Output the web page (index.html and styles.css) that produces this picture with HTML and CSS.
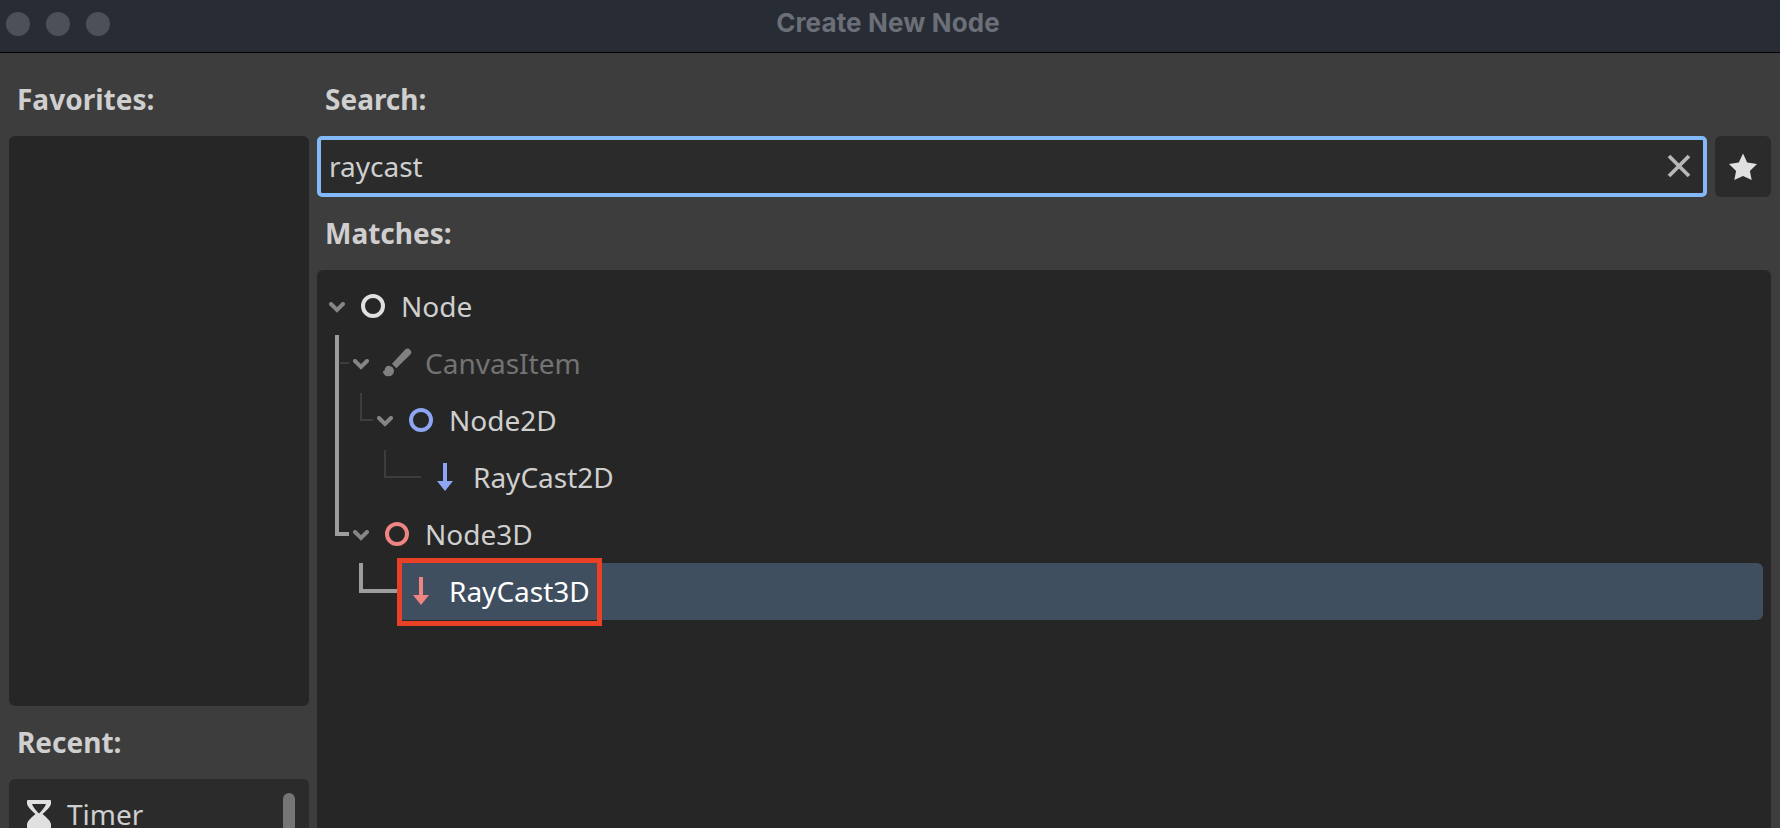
FILE: index.html
```html
<!DOCTYPE html>
<html lang="en">
<head>
<meta charset="utf-8">
<title>Create New Node</title>
<link rel="stylesheet" href="styles.css">
</head>
<body>
<div class="window">
  <header class="titlebar">
    <div class="lights"><span class="light"></span><span class="light"></span><span class="light"></span></div>
    <h1 class="title">Create New Node</h1>
  </header>
  <main class="content">
    <aside class="sidebar">
      <h2 class="label">Favorites:</h2>
      <div class="favorites"></div>
      <h2 class="label label-recent">Recent:</h2>
      <div class="recent">
        <svg class="timer" width="26" height="30" viewBox="0 0 26 30"><path fill="#e0e0e0" fill-rule="evenodd" d="M2 1h22q1 0 1 1v2.500c0 3-5.500 8-8.500 10.500 3 2.500 8.500 7 8.500 10.500V29H1v-3.500c0-3.500 5.500-8 8.500-10.500C6.500 12.500 1 7.500 1 4.500V2q0-1 1-1zM6 5c1 3 4.500 7 7 9.500 2.500-2.500 6-6.500 7-9.500z"/></svg>
        <span class="recent-name">Timer</span>
        <span class="scrollbar"></span>
      </div>
    </aside>
    <section class="main">
      <h2 class="label">Search:</h2>
      <div class="search-row">
        <div class="search"><span class="query">raycast</span>
          <svg class="clear" width="24" height="24" viewBox="0 0 24 24"><path d="M2 2 22 22M22 2 2 22" stroke="#b8b8b8" stroke-width="3.800"/></svg>
        </div>
        <div class="star"><svg width="28" height="28" viewBox="0 0 28 28"><path fill="#e0e0e0" d="M14 0.500 18.200 9.500 28 11 20.900 18 22.700 27 14 23 5.300 27 7.100 18 0 11 9.800 9.500z"/></svg></div>
      </div>
      <h2 class="label label-matches">Matches:</h2>
      <div class="tree">
        <svg class="guides" width="120" height="342" viewBox="0 0 120 342">
          <path class="thin" d="M23 85H32M44 115V142H56M68 172V199H104"/>
          <path class="thick" d="M20 57V256H32M44 285V313H82"/>
        </svg>
        <div class="rows">
          <div class="row"><svg class="chevron" viewBox="0 0 16 11"><path d="M2 2 8 8 14 2"/></svg><svg class="icon" viewBox="0 0 32 32"><circle cx="16" cy="16" r="10" stroke="#e0e0e0"/></svg><span>Node</span></div>
          <div class="row depth-1 muted"><svg class="chevron" viewBox="0 0 16 11"><path d="M2 2 8 8 14 2"/></svg><svg class="icon" viewBox="0 0 32 32"><path fill="#808080" d="M11 16.700 24 2.700a3.600 3.600 0 0 1 5.100 5.100L15.300 21.300zM7.700 18.700a5.300 5.300 0 0 1 0 10.600C4 29.300 2 27 2 23.700c.8.500 1.600.3 1.600-.7.300-2.500 1.800-4.300 4.100-4.300z"/></svg><span>CanvasItem</span></div>
          <div class="row depth-2"><svg class="chevron" viewBox="0 0 16 11"><path d="M2 2 8 8 14 2"/></svg><svg class="icon" viewBox="0 0 32 32"><circle cx="16" cy="16" r="10" stroke="#8da5f3"/></svg><span>Node2D</span></div>
          <div class="row depth-3"><span class="chevron"></span><svg class="icon" viewBox="0 0 32 32"><path fill="#8da5f3" d="M14 2h4v18h6l-8 10-8-10h6z"/></svg><span>RayCast2D</span></div>
          <div class="row depth-1"><svg class="chevron" viewBox="0 0 16 11"><path d="M2 2 8 8 14 2"/></svg><svg class="icon" viewBox="0 0 32 32"><circle cx="16" cy="16" r="10" stroke="#ef8583"/></svg><span>Node3D</span></div>
          <div class="row selected"><svg class="icon" viewBox="0 0 32 32"><path fill="#ef8583" d="M14 2h4v18h6l-8 10-8-10h6z"/></svg><span>RayCast3D</span><div class="highlight"></div></div>
        </div>
      </div>
    </section>
  </main>
</div>
</body>
</html>
```
FILE: styles.css
```css
* { box-sizing: border-box; }
body { margin: 0; background: #3d3d3d; }
svg { display: block; flex: none; }
.window { width: 1780px; height: 828px; overflow: hidden; background: #3d3d3d; color: #cfcfcf; font-family: "Noto Sans", sans-serif; font-size: 28px; }
.titlebar { height: 53px; background: #282c34; border-bottom: 1px solid #000; display: grid; grid-template-columns: 200px 1fr 204px; }
.lights { display: flex; gap: 16px; padding: 12px 6px; }
.light { width: 24px; height: 24px; border-radius: 50%; background: #4d5059; }
.title { margin: 0; text-align: center; font: 700 26px/46px Inter, sans-serif; letter-spacing: 0.13px; color: #6b6f78; }
.content { display: grid; grid-template-columns: 300px 1454px; gap: 8px; padding: 0 9px; height: 775px; }
.sidebar, .main { display: flex; flex-direction: column; min-width: 0; }
.label { margin: 0; padding: 27px 8px 0; height: 83px; flex: none; font-size: 28px; font-weight: 700; line-height: 38px; }
.favorites { height: 570px; flex: none; background: #262626; border-radius: 6px; }
.label-recent, .label-matches { height: 73px; padding-top: 17px; }
.recent { flex: 1; display: flex; align-items: flex-start; background: #2b2b2b; border-radius: 6px 6px 0 0; padding: 14px 14px 0 17px; }
.timer { margin-top: 6px; }
.recent-name { margin-left: 15px; line-height: 42px; }
.scrollbar { margin-left: auto; width: 12px; height: 60px; border-radius: 6px; background: #757575; }
.search-row { display: flex; gap: 8px; height: 61px; flex: none; }
.search { flex: 1; display: flex; align-items: center; justify-content: space-between; padding: 0 12px 0 8px; background: #2b2b2b; border: 4px solid #83b8f9; border-radius: 5px; }
.query { line-height: 53px; }
.clear { margin-bottom: 1px; }
.star { width: 56px; display: flex; align-items: center; justify-content: center; background: #2b2b2b; border-radius: 6px; }
.tree { flex: 1; display: grid; grid-template-columns: 1fr; align-items: start; padding: 8px 8px 0 0; background: #262626; border-radius: 6px 6px 0 0; }
.guides, .rows { grid-area: 1 / 1; }
.guides path { fill: none; }
.thin { stroke: #3d3d3d; stroke-width: 2; }
.thick { stroke: #9d9d9d; stroke-width: 4; }
.row { display: flex; align-items: center; height: 57px; white-space: nowrap; padding: 0 0 1px 12px; }
.depth-1 { padding-left: 36px; }
.depth-2 { padding-left: 60px; }
.depth-3 { padding-left: 84px; }
.chevron { width: 16px; height: 11px; flex: none; margin: 2px 12px 0 0; }
.chevron path { fill: none; stroke: #858585; stroke-width: 4; stroke-linecap: round; }
.icon { width: 32px; height: 32px; margin: 0 12px 1px 0; }
.icon circle { fill: none; stroke-width: 4; }
.muted { color: #737373; }
.selected { position: relative; margin-left: 80px; padding-left: 8px; background: #404f5f; color: #fff; border-radius: 6px; }
.highlight { position: absolute; left: 0; top: -5px; width: 205px; height: 68px; border: 5px solid #ea4025; }
```
